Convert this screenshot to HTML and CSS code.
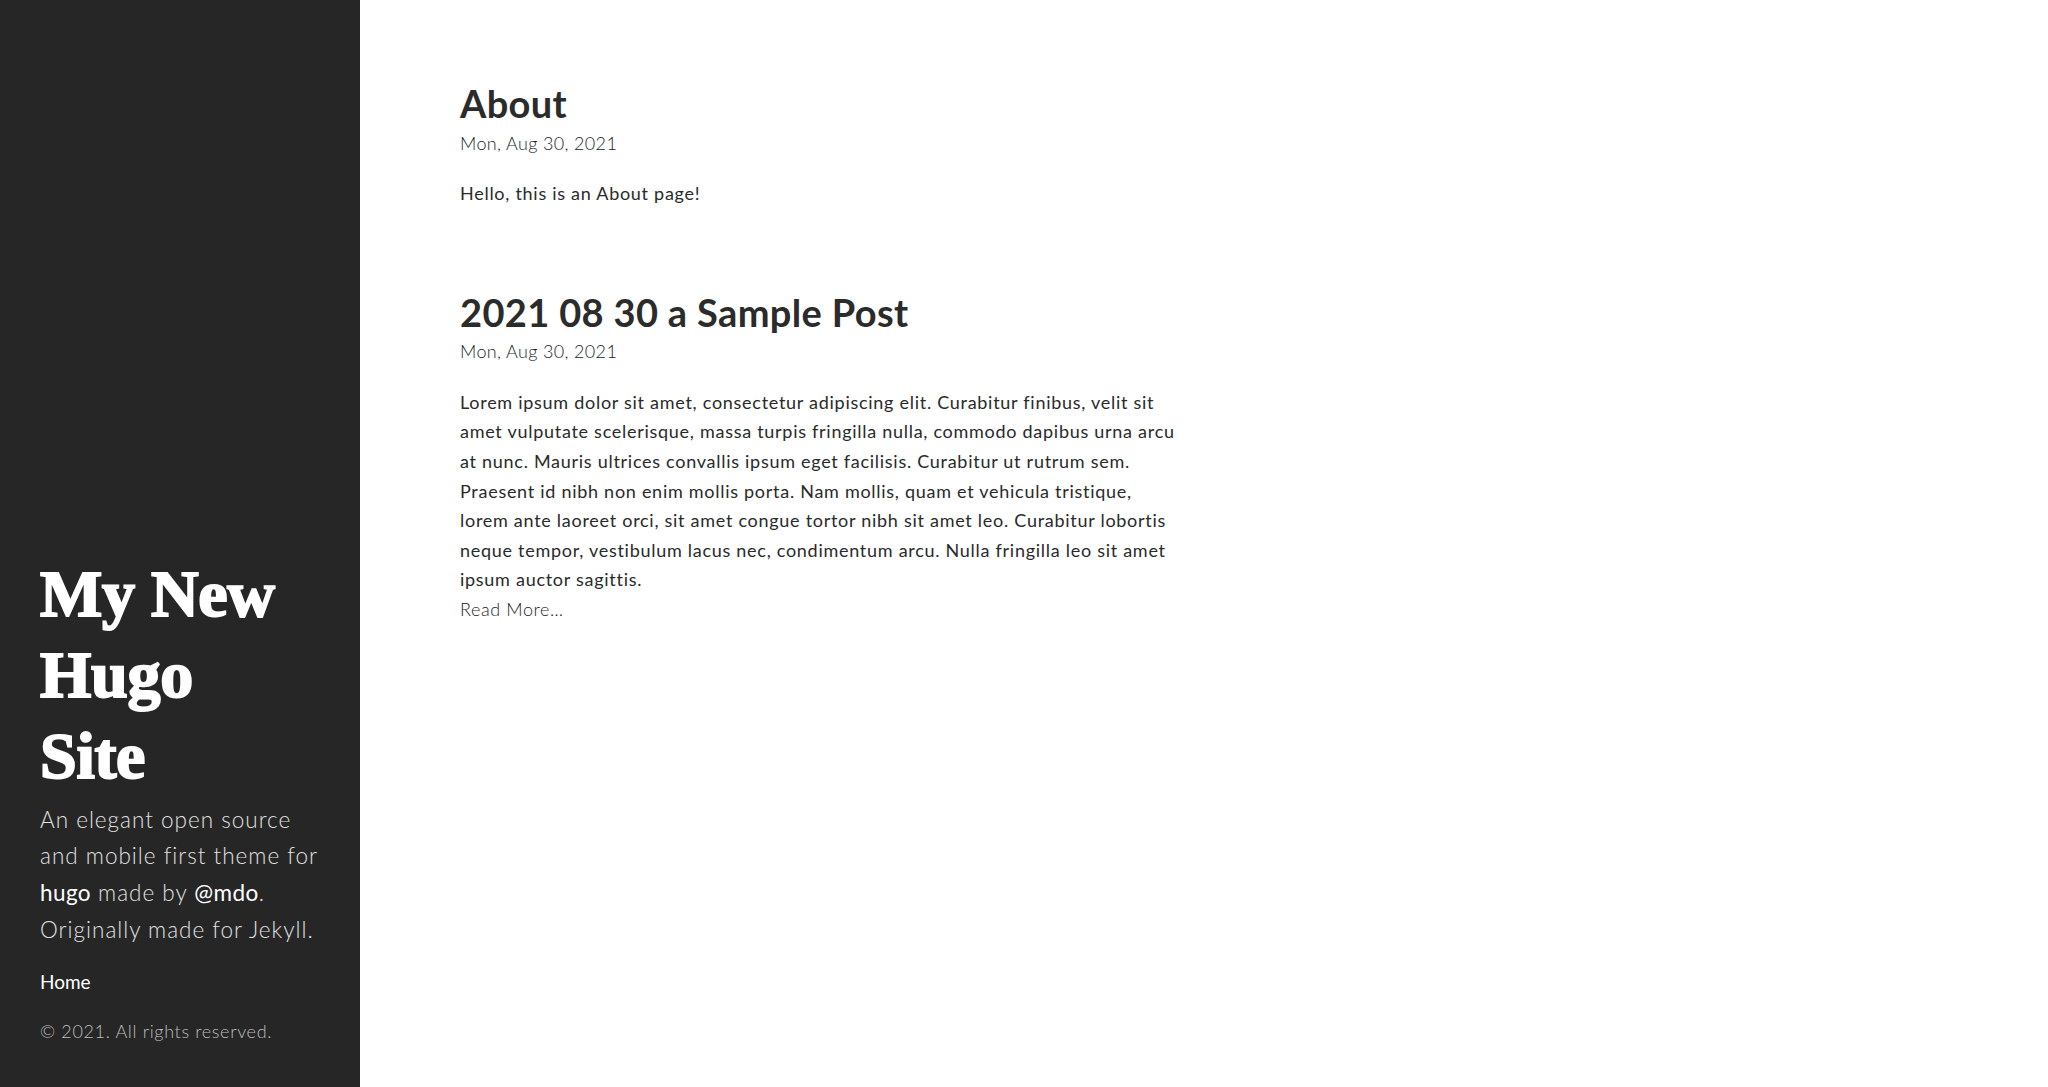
FILE: index.html
```html
<!DOCTYPE html>
<html lang="en">
<head>
<meta charset="utf-8">
<title>My New Hugo Site</title>
<link rel="stylesheet" href="styles.css">
</head>
<body>
<aside class="sidebar">
  <div class="sidebar-about">
    <h1 class="site-title"><a href="#">My New Hugo Site</a></h1>
    <p class="lead">An elegant open source and mobile first theme for <a href="#">hugo</a> made by <a href="#">@mdo</a>. Originally made for Jekyll.</p>
  </div>
  <nav class="sidebar-nav">
    <a class="sidebar-nav-item" href="#">Home</a>
  </nav>
  <p class="copyright">&copy; 2021. All rights reserved.</p>
</aside>
<main class="content">
  <article class="post">
    <h1 class="post-title"><a href="#">About</a></h1>
    <span class="post-date">Mon, Aug 30, 2021</span>
    <div class="summary">Hello, this is an About page!</div>
  </article>
  <article class="post">
    <h1 class="post-title"><a href="#">2021 08 30 a Sample Post</a></h1>
    <span class="post-date">Mon, Aug 30, 2021</span>
    <div class="summary">Lorem ipsum dolor sit amet, consectetur adipiscing elit. Curabitur finibus, velit sit amet vulputate scelerisque, massa turpis fringilla nulla, commodo dapibus urna arcu at nunc. Mauris ultrices convallis ipsum eget facilisis. Curabitur ut rutrum sem. Praesent id nibh non enim mollis porta. Nam mollis, quam et vehicula tristique, lorem ante laoreet orci, sit amet congue tortor nibh sit amet leo. Curabitur lobortis neque tempor, vestibulum lacus nec, condimentum arcu. Nulla fringilla leo sit amet ipsum auctor sagittis.</div>
    <div class="read-more"><a href="#">Read More…</a></div>
  </article>
</main>
</body>
</html>
```
FILE: styles.css
```css
* { box-sizing: border-box; }
html, body {
  margin: 0;
  padding: 0;
}
body {
  display: flex;
  min-height: 100vh;
  background: #ffffff;
  color: #333333;
  font-family: Lato, "Noto Sans", "Liberation Sans", sans-serif;
  font-size: 18px;
  line-height: 29.6px;
  letter-spacing: 0.72px;
}
a { text-decoration: none; color: inherit; }

.sidebar {
  flex: 0 0 360px;
  width: 360px;
  height: 100vh;
  background: #262626;
  color: #d6d6d6;
  display: flex;
  flex-direction: column;
  justify-content: flex-end;
  padding: 0 40px 40px 40px;
}
.site-title {
  margin: 0 0 6px 0;
  max-width: 250px;
  font-family: "Liberation Serif", "Times New Roman", serif;
  font-weight: 700;
  font-size: 66px;
  line-height: 81px;
  color: #ffffff;
  -webkit-text-stroke: 2px #ffffff;
  letter-spacing: -0.3px;
}
.site-title a { color: #ffffff; }
.lead {
  margin: 0 0 17px 0;
  font-size: 22.5px;
  line-height: 36.7px;
  font-weight: 300;
  letter-spacing: 1px;
  color: #e0e0e0;
}
.lead a { color: #ffffff; font-weight: 400; letter-spacing: 0.4px; }
.sidebar-nav {
  margin-bottom: 19px;
}
.sidebar-nav-item {
  display: block;
  font-size: 19px;
  line-height: 33px;
  letter-spacing: 0;
  color: #ffffff;
}
.copyright {
  margin: 0;
  font-size: 18px;
  font-weight: 300;
  letter-spacing: 0.65px;
  color: #bdbdbd;
}

.content {
  padding: 80px 20px 80px 100px;
  width: 840px;
}
.post {
  margin-bottom: 80px;
}
.post-title {
  margin: 0 0 1px 0;
  font-size: 38px;
  line-height: 47.5px;
  font-weight: 700;
  letter-spacing: 0.35px;
  color: #2b2b2b;
}
.post-title a { color: #2b2b2b; }
.post-date {
  display: block;
  margin-bottom: 21px;
  font-weight: 300;
  letter-spacing: 0.35px;
  color: #1e1e1e;
}
.summary {
  color: #2a2a2a;
}
.read-more a {
  font-weight: 300;
  letter-spacing: 0.6px;
  color: #1e1e1e;
}
```
